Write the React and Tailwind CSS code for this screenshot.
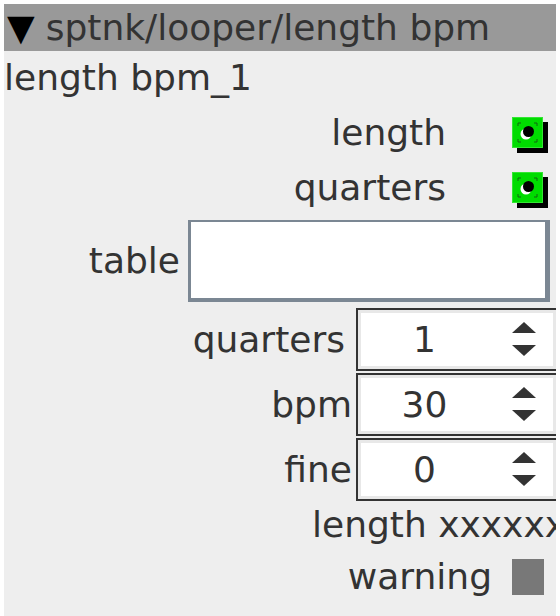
import React from "react";

function Toggle() {
    return (
        <svg width="36" height="36" viewBox="0 0 36 36" className="block">
            <rect x="5" y="5" width="31" height="31" fill="#000" />
            <rect x="0.5" y="0.5" width="30" height="30" fill="#00dc00" stroke="#33e633" />
            <path d="M6 9V6h3M22 6h3v3M25 22v3h-3M9 25H6v-3" stroke="#116611" strokeWidth="1" fill="none" />
            <circle cx="14" cy="17" r="5.5" fill="#fff" />
            <circle cx="16.5" cy="14.5" r="5.5" fill="#000" />
        </svg>
    );
}

function Spinner({ value }) {
    return (
        <div className="w-[202px] h-[63px] shrink-0 border-2 border-[#333333] bg-white">
            <div className="h-full border-[3px] border-[#e8e8e8] flex items-center">
                <span className="w-[127px] text-center leading-none">{value}</span>
                <svg width="26" height="36" viewBox="0 0 26 36" className="ml-[23px]">
                    <polygon points="13,0 25,11 1,11" fill="#333" />
                    <polygon points="1,23 25,23 13,34" fill="#333" />
                </svg>
            </div>
        </div>
    );
}

export default function App() {
    return (
        <div className="w-[560px] h-[616px] bg-white pt-1 px-1 overflow-hidden font-['DejaVu_Sans',sans-serif] text-[36px] text-[#333333]">
            <div className="h-full bg-[#eeeeee] overflow-hidden">
                {/* header */}
                <div className="h-[47px] bg-[#999999] flex items-center pl-[3px] whitespace-nowrap leading-none">
                    <span className="text-black">▼</span>
                    <span className="ml-[11px]">sptnk/looper/length bpm</span>
                </div>

                <div className="h-[54px] flex items-center leading-none">length bpm_1</div>

                <div className="h-[55px] flex items-center justify-end pr-[8px] leading-none">
                    <span>length</span>
                    <div className="ml-[66px] mt-[4px]"><Toggle /></div>
                </div>
                <div className="h-[56px] flex items-center justify-end pr-[8px] leading-none">
                    <span>quarters</span>
                    <div className="ml-[66px] mt-[4px]"><Toggle /></div>
                </div>

                {/* table */}
                <div className="flex items-center mt-[4px] leading-none">
                    <span className="w-[176px] shrink-0 text-right">table</span>
                    <div className="ml-[8px] w-[362px] h-[82px] shrink-0 bg-white border-t-2 border-l-[3px] border-r-[5px] border-b-4 border-[#7b8793]" />
                </div>

                {/* spinners */}
                <div className="mt-[6px] flex flex-col gap-[2px] leading-none">
                    <div className="flex items-center">
                        <span className="w-[341px] shrink-0 text-right">quarters</span>
                        <div className="ml-[11px]"><Spinner value="1" /></div>
                    </div>
                    <div className="flex items-center">
                        <span className="w-[348px] shrink-0 text-right">bpm</span>
                        <div className="ml-[4px]"><Spinner value="30" /></div>
                    </div>
                    <div className="flex items-center">
                        <span className="w-[348px] shrink-0 text-right">fine</span>
                        <div className="ml-[4px]"><Spinner value="0" /></div>
                    </div>
                </div>

                <div className="h-[48px] flex items-center pl-[308px] whitespace-nowrap leading-none">length xxxxxxxx</div>

                <div className="h-[56px] flex items-center justify-end pr-[12px] leading-none">
                    <span>warning</span>
                    <div className="ml-[20px] w-[32px] h-[36px] bg-[#787878]" />
                </div>
            </div>
        </div>
    );
}
